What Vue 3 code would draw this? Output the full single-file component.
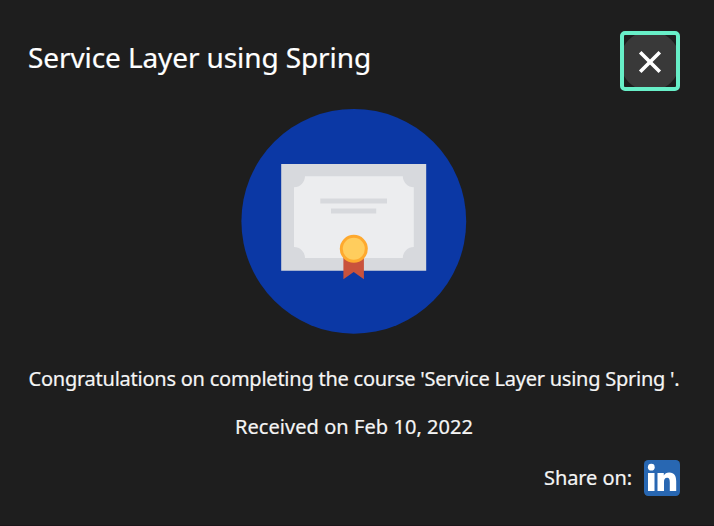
<script setup>
const course = 'Service Layer using Spring'
const received = 'Feb 10, 2022'
</script>

<template>
  <main class="dialog">
    <header class="head">
      <h1 class="title">{{ course }}</h1>
      <button class="close" type="button" aria-label="Close">
        <svg width="52" height="52" viewBox="0 0 52 52">
          <circle cx="26" cy="26" r="30" fill="#393939" />
          <path d="M16.2 17.2 35.8 36.8M35.8 17.2 16.2 36.8" stroke="#fff" stroke-width="3.6" />
        </svg>
      </button>
    </header>
    <svg class="badge" width="226" height="226" viewBox="241 108 226 226">
      <circle cx="353.8" cy="221.3" r="112.4" fill="#0b38a5" />
      <path d="M281.2 164H426.2V270.8H281.2z" fill="#d7d9dd" />
      <path d="M305 176.3H402.8A11 11 0 0 0 413.8 187.2V247A11 11 0 0 0 402.8 258H305A11 11 0 0 0 294 247V187.2A11 11 0 0 0 305 176.3z" fill="#ecedef" />
      <path d="M320.3 198.4H387V203.5H320.3zM331 208.5H376.2V213.4H331z" fill="#d7d9dd" />
      <path d="M343.4 255H363.9V279.2L353.7 272 343.4 279.2z" fill="#c9523c" />
      <circle cx="353.8" cy="248.8" r="14" fill="#fea92e" />
      <circle cx="353.8" cy="248.8" r="11" fill="#ffcd5d" />
    </svg>
    <p class="message">Congratulations on completing the course '{{ course }} '.</p>
    <p class="received">Received on {{ received }}</p>
    <footer class="share">
      <span class="label">Share on:</span>
      <svg width="36" height="36" viewBox="0 0 36 36">
        <rect width="36" height="36" rx="4.2" fill="#2867b2" />
        <circle cx="7.3" cy="7.2" r="3.4" fill="#fff" />
        <path d="M4 13H10.5V31H4zM13.5 13H19.8V15.4C20.8 13.6 22.6 12.4 25.2 12.4C30.6 12.4 32.2 16 32.2 21.2V31H25.8V22.3C25.8 19.6 25.3 17.8 23.1 17.8C20.8 17.8 20 19.5 20 22.3V31H13.5z" fill="#fff" />
      </svg>
    </footer>
  </main>
</template>

<style>
body { margin: 0; background: #1e1e1e; }
</style>

<style scoped>
.dialog {
  box-sizing: border-box;
  display: flex;
  flex-direction: column;
  align-items: center;
  width: 714px;
  height: 526px;
  padding: 31px 34px 0 28px;
  border-bottom: 1px solid #1b1519;
  background: #1e1e1e;
  color: #fff;
  font-family: "Noto Sans", sans-serif;
  -webkit-text-stroke: 0.2px currentColor;
  overflow: hidden;
}
.head { display: flex; justify-content: space-between; width: 100%; height: 77px; }
.title { margin: 7px 0 0; font-size: 28px; line-height: 38px; font-weight: 400; letter-spacing: -0.1px; white-space: nowrap; }
.close {
  box-sizing: border-box;
  width: 60px;
  height: 60px;
  padding: 0;
  border: 4px solid #68efc8;
  border-radius: 5px;
  background: #1e1e1e;
}
.close svg { display: block; }
.badge { flex: none; display: block; }
.message, .received { margin: 0; font-size: 20px; line-height: 28px; white-space: nowrap; color: #f5f5f5; }
.message { margin-top: 31px; letter-spacing: -0.24px; }
.received { margin-top: 20px; letter-spacing: 0.06px; }
.share { display: flex; align-items: center; align-self: flex-end; gap: 12px; margin-top: 19px; }
.share svg { display: block; }
.label { font-size: 20px; line-height: 28px; letter-spacing: -0.08px; color: #f5f5f5; }
</style>
